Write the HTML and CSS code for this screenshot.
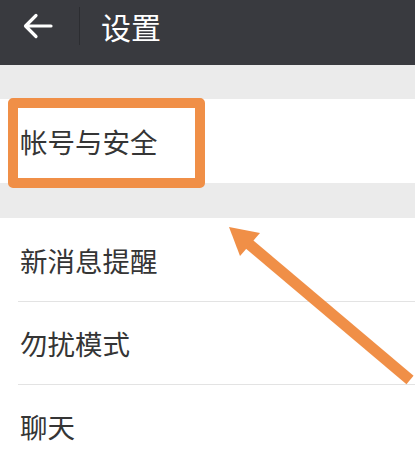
FILE: index.html
```html
<!DOCTYPE html>
<html lang="zh-CN">
<head>
<meta charset="utf-8">
<link rel="stylesheet" href="styles.css">
</head>
<body>
<div class="page">
  <header class="topbar">
    <span class="back">
      <svg width="30" height="26" viewBox="0 0 30 26"><path d="M28 13H3M13 2.5L2.5 13L13 23.5" fill="none" stroke="#fff" stroke-width="3.2" stroke-linecap="round" stroke-linejoin="round"/></svg>
    </span>
    <span class="divider"></span>
    <span class="title">设置</span>
  </header>
  <div class="spacer"></div>
  <section class="group">
    <div class="row first">帐号与安全</div>
  </section>
  <div class="spacer second"></div>
  <section class="group">
    <div class="row">新消息提醒</div>
    <div class="row">勿扰模式</div>
    <div class="row">聊天</div>
  </section>
  <div class="highlight"></div>
  <svg class="arrow" width="415" height="457" viewBox="0 0 415 457">
    <line x1="410" y1="380" x2="249" y2="244" stroke="#f08f47" stroke-width="11"/>
    <polygon points="229,227 260,233 240,256" fill="#f08f47"/>
  </svg>
</div>
</body>
</html>
```

FILE: styles.css
```css
html, body {
  margin: 0;
  padding: 0;
  background: #ebebeb;
}
.page {
  position: relative;
  width: 415px;
  height: 457px;
  overflow: hidden;
  font-family: "Noto Sans CJK SC", "Noto Sans", sans-serif;
}
.topbar {
  height: 65px;
  box-sizing: border-box;
  padding-bottom: 13px;
  background: #393a3f;
  display: flex;
  align-items: center;
}
.back {
  width: 30px;
  height: 26px;
  margin-left: 23px;
  display: flex;
}
.divider {
  width: 1px;
  height: 38px;
  background: #2c2d31;
  margin-left: 26px;
}
.title {
  margin-left: 21px;
  color: #fff;
  font-size: 30px;
  line-height: 1;
}
.spacer {
  height: 34px;
  background: #ebebeb;
}
.spacer.second {
  height: 35px;
}
.group {
  background: #fff;
}
.row {
  height: 83px;
  box-sizing: border-box;
  margin-left: 18px;
  padding-left: 2px;
  display: flex;
  align-items: center;
  font-size: 27.5px;
  color: #353535;
  border-top: 1px solid #e3e3e3;
}
.row:first-child {
  border-top: none;
}
.row.first {
  height: 84px;
}
.highlight {
  position: absolute;
  left: 8px;
  top: 98px;
  width: 197px;
  height: 90px;
  box-sizing: border-box;
  border: 10px solid #f08f47;
  border-radius: 5px;
}
.arrow {
  position: absolute;
  left: 0;
  top: 0;
}
```
